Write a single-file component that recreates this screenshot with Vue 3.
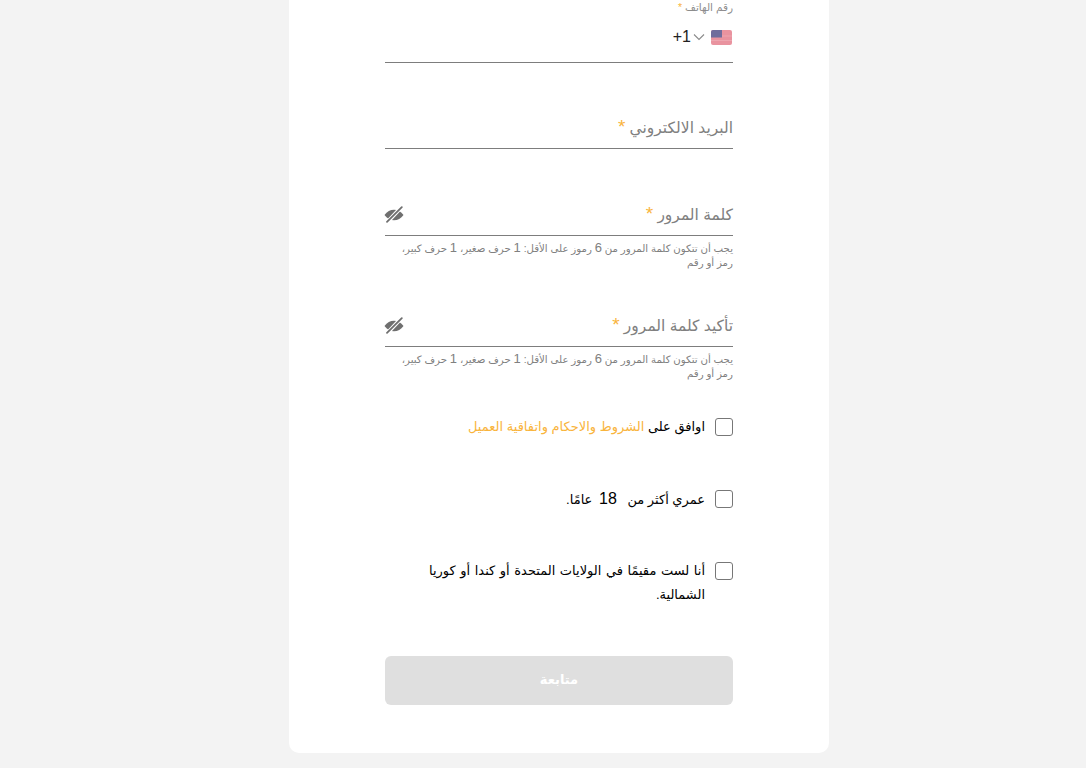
<script setup>
const passwords = [
  { label: 'كلمة المرور' },
  { label: 'تأكيد كلمة المرور' },
]
</script>

<template>
  <div class="page" dir="rtl">
    <main class="card">
      <div class="field phone">
        <div class="small-label">رقم الهاتف <span class="star">*</span></div>
        <div class="phone-row">
          <svg class="flag" viewBox="0 0 21 15" width="21" height="15">
            <rect width="21" height="15" rx="2" fill="#e9939f" />
            <rect y="5.500" width="21" height="1" fill="#eda6b0" />
            <rect y="10" width="21" height="1" fill="#eda6b0" />
            <path d="M2 0H11v7.500H0V2A2 2 0 0 1 2 0z" fill="#6f6c9c" />
          </svg>
          <svg class="chev" viewBox="0 0 12 8" width="12" height="8">
            <path d="M1 1.500l5 5 5-5" fill="none" stroke="#8a8a8a" stroke-width="1.100" />
          </svg>
          <span class="code" dir="ltr">+1</span>
        </div>
      </div>

      <div class="field email">
        <div class="big-label">البريد الالكتروني <span class="star big-star">*</span></div>
      </div>

      <div v-for="p in passwords" :key="p.label" class="pw">
        <div class="field pw-field">
          <div class="big-label">{{ p.label }} <span class="star big-star">*</span></div>
          <svg class="eye" viewBox="0 0 20 17" width="20" height="17">
            <path d="M0.500 9C3 5.500 6.300 3.800 10 3.800c3.700 0 7 1.700 9.500 5.200-2.500 3.500-5.800 5.200-9.500 5.200-3.700 0-7-1.700-9.500-5.200z" fill="#6f6f6f" />
            <path d="M2.500 17L17.500 1" fill="none" stroke="#fff" stroke-width="4" />
            <path d="M3 15.800L17.800 1.200" fill="none" stroke="#6f6f6f" stroke-width="1.800" stroke-linecap="round" />
          </svg>
        </div>
        <p class="hint">يجب أن تتكون كلمة المرور من <span class="hint-num">6</span> رموز على الأقل: <span class="hint-num">1</span> حرف صغير، <span class="hint-num">1</span> حرف كبير،<br />رمز أو رقم</p>
      </div>

      <label class="check first">
        <span class="box"></span>
        <span class="check-text">اوافق على <span class="link">الشروط والاحكام واتفاقية العميل</span></span>
      </label>
      <label class="check">
        <span class="box"></span>
        <span class="check-text">عمري أكثر من <span class="num">18</span> عامًا.</span>
      </label>
      <label class="check">
        <span class="box"></span>
        <span class="check-text">أنا لست مقيمًا في الولايات المتحدة أو كندا أو كوريا الشمالية.</span>
      </label>

      <button class="submit" type="button">متابعة</button>
    </main>
  </div>
</template>

<style scoped>
.page {
  box-sizing: border-box;
  height: 768px;
  overflow: hidden;
  background: #f3f3f3;
  display: flex;
  flex-direction: column;
  justify-content: flex-end;
  align-items: center;
  padding: 0 0 15px 32px;
  font-family: "Liberation Sans", "DejaVu Sans", sans-serif;
}
.card {
  box-sizing: border-box;
  width: 540px;
  flex: none;
  background: #fff;
  border-radius: 0 0 10px 10px;
  padding: 0 96px 48px;
  display: flex;
  flex-direction: column;
}
.field {
  border-bottom: 1px solid #7d7d7d;
}
.small-label {
  font-size: 10.500px;
  line-height: 14px;
  color: #8c8c8c;
}
.star {
  color: #f9b43c;
}
.big-star {
  font-size: 19px;
  line-height: 20px;
}
.phone-row {
  box-sizing: border-box;
  height: 48px;
  padding: 0 1px 2px 0;
  display: flex;
  align-items: center;
}
.flag {
  flex: none;
}
.chev {
  flex: none;
  margin-right: 6px;
}
.code {
  margin-right: 2px;
  font-size: 16px;
  color: #222;
}
.big-label {
  font-size: 15.500px;
  line-height: 24px;
  color: #808080;
}
.email {
  margin-top: 53px;
  padding-bottom: 8px;
}
.pw {
  display: flex;
  flex-direction: column;
}
.pw-field {
  margin-top: 54px;
  padding-bottom: 8px;
  display: flex;
  justify-content: space-between;
  align-items: center;
}
.pw + .pw .pw-field {
  margin-top: 44px;
}
.eye {
  flex: none;
  margin: -2px -1px 0 0;
  margin-left: -1px;
  margin-right: 0;
}
.hint {
  margin: 6px 0 0;
  font-size: 10.200px;
  line-height: 14px;
  color: #808080;
}
.hint-num {
  font-size: 13px;
  line-height: 0;
}
.check {
  display: flex;
  align-items: flex-start;
  gap: 10px;
  font-size: 13px;
  line-height: 24px;
  color: #000;
  margin-top: 24px;
  min-height: 48px;
  padding-left: 44px;
}
.check.first {
  margin-top: 34px;
}
.check-text {
  text-align: justify;
}
.num {
  font-size: 16px;
  padding: 0 7px 0 3px;
}
.box {
  box-sizing: border-box;
  flex: none;
  width: 18px;
  height: 18px;
  margin-top: 3px;
  background: #fff;
  border: 1px solid #777;
  border-radius: 3px;
}
.link {
  color: #f9b43c;
}
.submit {
  height: 49px;
  margin-top: 49px;
  padding: 0 0 3px;
  border: 0;
  border-radius: 6px;
  background: #dfdfdf;
  color: #fff;
  font: bold 13px "Liberation Sans", "DejaVu Sans", sans-serif;
}
</style>
